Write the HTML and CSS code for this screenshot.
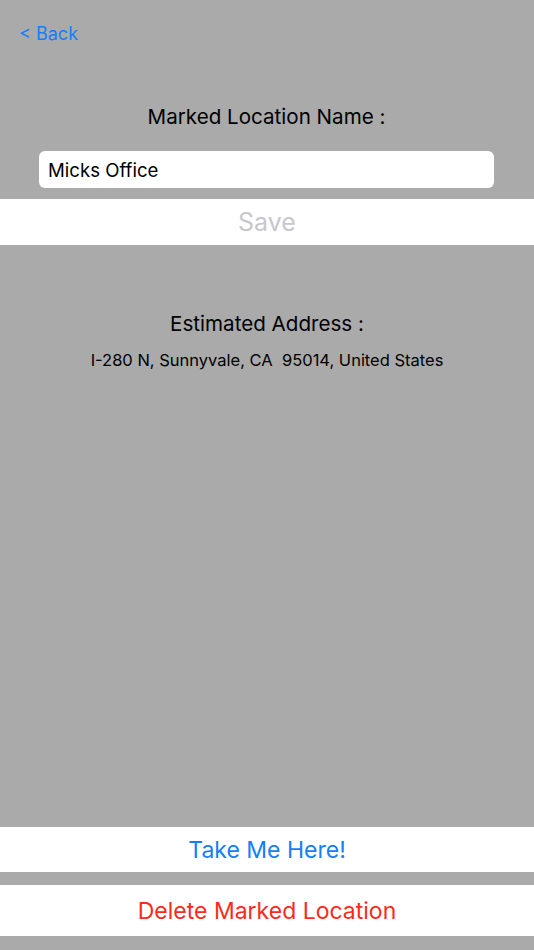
FILE: index.html
```html
<!DOCTYPE html>
<html>
<head>
  <meta charset="utf-8">
  <title>Marked Location</title>
  <meta name="viewport" content="width=device-width, initial-scale=1">
  <link rel="stylesheet" href="styles.css">
</head>
<body>
  <div class="screen">
    <div class="nav">
      <a class="back" href="#">&lt; Back</a>
    </div>

    <div class="name-section">
      <p class="label">Marked Location Name :</p>
      <input type="text" class="name-input" value="Micks Office">
    </div>

    <button class="bar-btn save">Save</button>

    <div class="address-section">
      <p class="label">Estimated Address :</p>
      <p class="address">I-280 N, Sunnyvale, CA&nbsp; 95014, United States</p>
    </div>

    <div class="actions">
      <button class="bar-btn take">Take Me Here!</button>
      <button class="bar-btn delete">Delete Marked Location</button>
    </div>
  </div>
</body>
</html>
```

FILE: styles.css
```css
* {
  box-sizing: border-box;
}

html, body {
  margin: 0;
  padding: 0;
  height: 950px;
  background: #aaaaaa;
  font-family: Inter, "Noto Sans", sans-serif;
}

.screen {
  height: 950px;
  display: flex;
  flex-direction: column;
}

.nav {
  height: 66px;
  display: flex;
  align-items: center;
  padding-left: 19px;
}

.back {
  color: #147efb;
  text-decoration: none;
  font-size: 18px;
}

.name-section {
  display: flex;
  flex-direction: column;
  align-items: center;
  padding: 36px 40px 0 39px;
}

.label {
  margin: 0;
  font-size: 20.6px;
  line-height: 30px;
  color: #000;
}

.name-input {
  margin-top: 19px;
  width: 455px;
  height: 37px;
  border: none;
  border-radius: 6px;
  background: #fff;
  padding: 0 9px;
  font-family: inherit;
  font-size: 18.6px;
  color: #000;
}

.bar-btn {
  display: block;
  width: 100%;
  border: none;
  background: #fff;
  font-family: inherit;
  font-size: 23px;
  text-align: center;
  padding: 0;
}

.save {
  margin-top: 11px;
  height: 46px;
  font-size: 25px;
  color: #c7c7cc;
}

.address-section {
  display: flex;
  flex-direction: column;
  align-items: center;
  padding-top: 64px;
}

.address {
  margin: 9px 0 0;
  font-size: 16.5px;
  line-height: 24px;
  color: #000;
}

.actions {
  margin-top: auto;
  margin-bottom: 14px;
  display: flex;
  flex-direction: column;
  gap: 13px;
}

.take {
  height: 45px;
  color: #147efb;
}

.delete {
  height: 51px;
  color: #fc2a1c;
}
```
